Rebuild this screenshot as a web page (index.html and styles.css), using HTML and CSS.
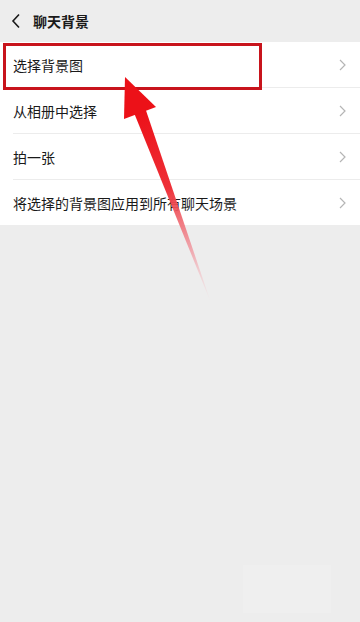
FILE: index.html
```html
<!DOCTYPE html>
<html lang="zh">
<head>
<meta charset="utf-8">
<link rel="stylesheet" href="styles.css">
</head>
<body>
<div class="page">
  <header class="topbar">
    <svg class="back" width="10" height="16" viewBox="0 0 10 16"><path d="M8 1.5 L2 8 L8 14.5" fill="none" stroke="#1a1a1a" stroke-width="1.6"/></svg>
    <span class="title">聊天背景</span>
  </header>
  <ul class="list">
    <li class="row"><span>选择背景图</span><svg class="chev" width="7" height="12" viewBox="0 0 7 12"><path d="M1 1 L6 6 L1 11" fill="none" stroke="#b5b5b5" stroke-width="1.2"/></svg></li>
    <li class="row"><span>从相册中选择</span><svg class="chev" width="7" height="12" viewBox="0 0 7 12"><path d="M1 1 L6 6 L1 11" fill="none" stroke="#b5b5b5" stroke-width="1.2"/></svg></li>
    <li class="row"><span>拍一张</span><svg class="chev" width="7" height="12" viewBox="0 0 7 12"><path d="M1 1 L6 6 L1 11" fill="none" stroke="#b5b5b5" stroke-width="1.2"/></svg></li>
    <li class="row"><span>将选择的背景图应用到所有聊天场景</span><svg class="chev" width="7" height="12" viewBox="0 0 7 12"><path d="M1 1 L6 6 L1 11" fill="none" stroke="#b5b5b5" stroke-width="1.2"/></svg></li>
  </ul>
  <div class="highlight"></div>
  <svg class="arrow" width="360" height="622" viewBox="0 0 360 622">
    <defs>
      <linearGradient id="g" x1="140" y1="112" x2="211" y2="302" gradientUnits="userSpaceOnUse">
        <stop offset="0" stop-color="#ec1118"/>
        <stop offset="0.4" stop-color="#ee3038"/>
        <stop offset="0.75" stop-color="#f0a0a8" stop-opacity="0.8"/>
        <stop offset="1" stop-color="#f4dde0" stop-opacity="0.2"/>
      </linearGradient>
    </defs>
    <polygon points="145.5,109 134.5,114 211,303" fill="url(#g)"/>
    <polygon points="125,77 124,119 156,107" fill="#ec1118"/>
  </svg>
  <div class="mark"></div>
</div>
</body>
</html>
```
FILE: styles.css
```css
* { box-sizing: border-box; }
html, body { margin: 0; padding: 0; }
body {
  background: #ededed;
  font-family: "Noto Sans CJK SC", "Noto Sans", sans-serif;
  color: #1a1a1a;
}
.page {
  position: relative;
  width: 360px;
  height: 622px;
  overflow: hidden;
}
.topbar {
  height: 42px;
  display: flex;
  align-items: center;
  padding-left: 11px;
  gap: 12px;
}
.back { display: block; }
.title {
  font-size: 14px;
  font-weight: 700;
  color: #1a1a1a;
}
.list {
  list-style: none;
  margin: 0;
  padding: 0 0 0 13px;
  background: #fff;
}
.row {
  height: 46px;
  display: flex;
  align-items: center;
  justify-content: space-between;
  padding-right: 14px;
  font-size: 14px;
  border-bottom: 1px solid #ececec;
}
.row:last-child { border-bottom: none; height: 45px; }
.chev { display: block; }
.highlight {
  position: absolute;
  left: 3px;
  top: 43px;
  width: 259px;
  height: 47px;
  border: 3px solid #c8141c;
}
.arrow {
  position: absolute;
  left: 0;
  top: 0;
}
.mark {
  position: absolute;
  left: 243px;
  top: 565px;
  width: 88px;
  height: 48px;
  background: #f0f0f0;
  opacity: 0.6;
}
```
